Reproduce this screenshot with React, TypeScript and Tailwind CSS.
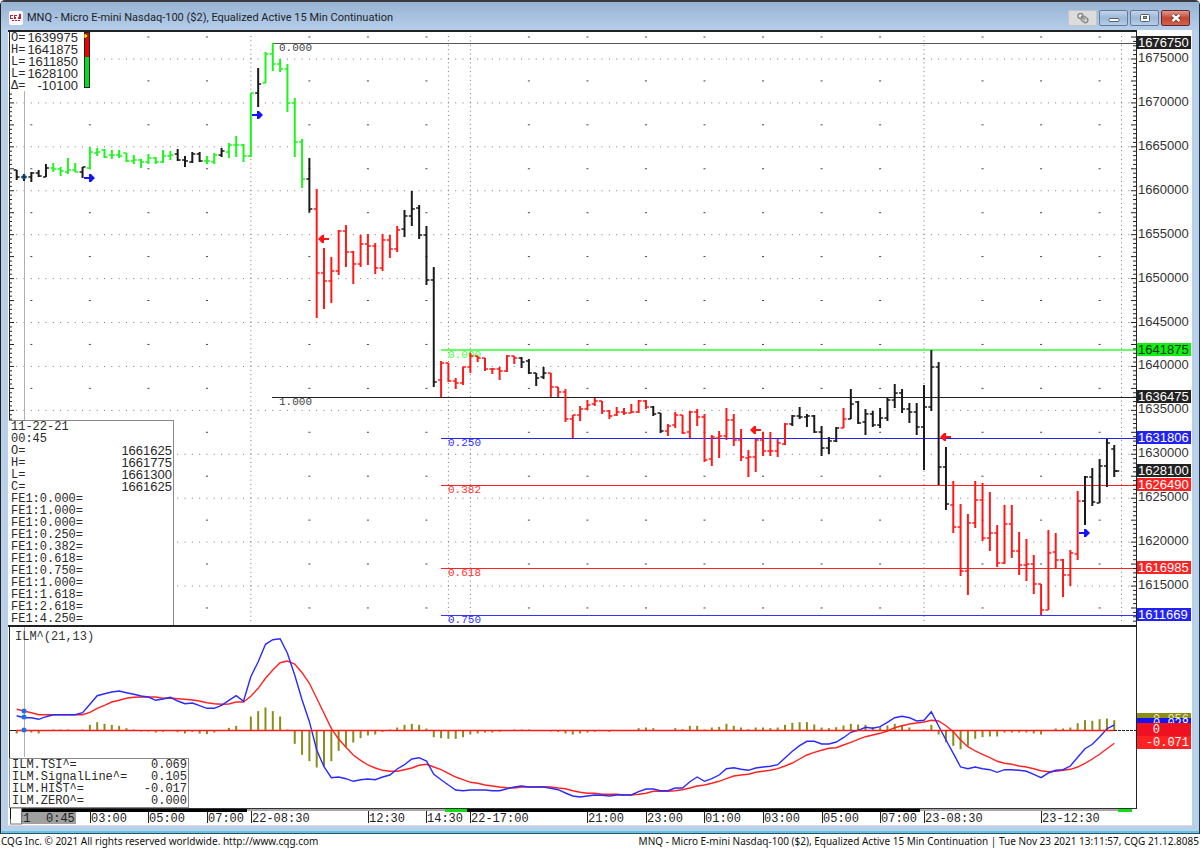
import type { ReactNode } from "react";

type Tone = "k" | "g" | "r";
// high, low, open, close on the plot's vertical scale
type Bar = [number, number, number, number];

const STEP = 7.317;
const FIRST_X = 16.7;
const barX = (i: number) => FIRST_X + i * STEP;

const TONES: Record<Tone, string> = { k: "#1a1a1a", g: "#1cf51c", r: "#ff1a1a" };

const runs: { tone: Tone; bars: Bar[] }[] = [
  { tone: "k", bars: [[170, 180, 170, 177], [174, 181, 177, 177], [172, 182, 177, 173], [170, 177, 173, 176], [164, 177, 177, 168]] },
  { tone: "g", bars: [[163, 172, 168, 169], [167, 176, 169, 171], [158, 174, 172, 170], [163, 172, 170, 172]] },
  { tone: "k", bars: [[167, 178, 172, 167]] },
  {
    tone: "g",
    bars: [
      [147, 169, 168, 152], [148, 156, 153, 152], [149, 158, 150, 157], [150, 159, 155, 155], [150, 158, 155, 156], [153, 162, 153, 161],
      [155, 164, 161, 160], [159, 168, 160, 162], [154, 164, 162, 158], [157, 164, 158, 162], [150, 163, 162, 156], [151, 160, 156, 155],
    ],
  },
  { tone: "k", bars: [[149, 161, 154, 160], [156, 167, 160, 161], [152, 163, 162, 154], [152, 162, 154, 161]] },
  { tone: "g", bars: [[156, 164, 161, 161], [153, 164, 162, 155]] },
  { tone: "k", bars: [[148, 157, 155, 151]] },
  { tone: "g", bars: [[143, 158, 152, 145], [136, 157, 145, 145], [144, 162, 145, 156], [93, 157, 156, 93]] },
  { tone: "k", bars: [[68, 107, 93, 84]] },
  { tone: "g", bars: [[52, 83, 83, 54], [43, 71, 54, 64], [59, 72, 64, 69], [64, 112, 69, 103], [98, 157, 103, 142], [139, 188, 142, 179]] },
  { tone: "k", bars: [[158, 212, 179, 209]] },
  {
    tone: "r",
    bars: [
      [189, 318, 209, 273], [248, 309, 273, 281], [257, 303, 281, 271], [230, 275, 271, 231], [225, 267, 231, 252], [251, 284, 252, 264],
      [235, 267, 264, 244], [234, 265, 244, 246], [243, 274, 246, 268], [234, 271, 268, 240], [235, 258, 240, 249], [226, 252, 249, 230],
    ],
  },
  { tone: "k", bars: [[210, 237, 229, 216], [191, 226, 216, 209], [205, 239, 208, 235], [226, 285, 235, 280], [267, 387, 280, 382]] },
  {
    tone: "r",
    bars: [
      [361, 397, 380, 363], [363, 382, 363, 381], [378, 389, 381, 383], [367, 385, 383, 367], [353, 373, 367, 356], [356, 362, 356, 358],
      [358, 371, 358, 369], [368, 374, 369, 369], [367, 380, 369, 371], [355, 372, 371, 356], [356, 364, 356, 358],
    ],
  },
  { tone: "k", bars: [[357, 368, 358, 362], [359, 374, 361, 373], [373, 386, 373, 378], [367, 379, 377, 373]] },
  {
    tone: "r",
    bars: [
      [373, 397, 373, 387], [387, 397, 387, 392], [389, 422, 392, 419], [415, 438, 419, 415], [406, 421, 415, 409], [400, 410, 409, 405],
      [398, 406, 404, 401], [401, 414, 401, 411], [410, 419, 411, 416], [407, 416, 415, 412], [408, 415, 412, 413], [404, 413, 413, 412],
      [400, 413, 412, 401], [400, 409, 401, 407],
    ],
  },
  { tone: "k", bars: [[406, 416, 407, 414], [413, 433, 413, 431]] },
  {
    tone: "r",
    bars: [
      [424, 436, 431, 426], [412, 428, 425, 415], [415, 434, 415, 433], [411, 438, 432, 412], [409, 426, 412, 417], [414, 462, 417, 460],
      [435, 466, 459, 437], [431, 458, 438, 436], [408, 440, 436, 420], [414, 446, 420, 440], [429, 461, 440, 457], [450, 477, 458, 457],
      [439, 472, 457, 440], [432, 456, 440, 451], [432, 456, 451, 451], [439, 457, 451, 443], [423, 445, 444, 424],
    ],
  },
  {
    tone: "k",
    bars: [
      [415, 426, 424, 416], [407, 419, 416, 417], [414, 427, 417, 416], [415, 433, 416, 432], [426, 456, 432, 448], [437, 454, 448, 441],
      [427, 442, 441, 428],
    ],
  },
  { tone: "r", bars: [[408, 428, 428, 419]] },
  {
    tone: "k",
    bars: [
      [389, 419, 419, 404], [401, 424, 402, 423], [409, 435, 422, 414], [411, 427, 414, 425], [408, 428, 425, 418], [398, 421, 418, 400],
      [384, 408, 400, 393], [389, 413, 393, 409], [403, 423, 409, 412], [403, 435, 412, 427], [385, 470, 427, 407], [350, 411, 407, 367],
      [362, 485, 367, 467], [447, 510, 467, 504],
    ],
  },
  {
    tone: "r",
    bars: [
      [481, 533, 505, 527], [504, 576, 527, 571], [514, 595, 571, 523], [481, 528, 523, 500], [483, 541, 500, 538], [492, 551, 538, 533],
      [525, 567, 533, 563], [505, 564, 563, 524], [505, 558, 524, 551], [532, 575, 551, 565], [539, 581, 565, 564], [555, 594, 564, 584],
      [584, 615, 584, 610], [530, 610, 610, 553], [533, 569, 552, 560], [559, 597, 560, 575], [550, 586, 575, 553], [491, 560, 554, 501],
    ],
  },
  { tone: "k", bars: [[476, 525, 501, 477], [468, 506, 477, 502], [459, 503, 503, 466], [439, 487, 466, 443], [445, 477, 449, 471]] },
];

const bars = runs.flatMap((run) => run.bars.map((bar) => ({ tone: run.tone, bar })));

// indicator series, in thirds of a unit below the panel's 640 mark
const tsi = [
  227, 233, 233, 238, 230, 224, 224, 224, 224, 218, 193, 167, 161, 156, 153, 158, 163, 168, 171, 181, 177, 172, 183, 191, 189, 197, 205, 205, 196,
  181, 167, 184, 110, 65, 13, -1, -4, 40, 105, 180, 245, 330, 380, 413, 411, 416, 424, 419, 417, 419, 411, 405, 387, 374, 357, 353, 363, 403, 419,
  435, 450, 452, 450, 450, 450, 452, 452, 446, 441, 438, 441, 441, 441, 445, 449, 459, 468, 471, 468, 465, 466, 468, 465, 465, 465, 455, 447, 447,
  452, 452, 444, 444, 425, 411, 424, 416, 405, 386, 383, 388, 391, 384, 381, 379, 374, 354, 334, 317, 304, 304, 312, 312, 306, 293, 277, 271, 262,
  265, 260, 247, 233, 229, 233, 243, 241, 215, 258, 300, 340, 381, 386, 381, 386, 389, 397, 389, 389, 391, 394, 403, 413, 399, 391, 389, 378, 352,
  326, 313, 291, 266, 255,
];

const signal = [
  208, 213, 218, 224, 224, 224, 224, 224, 224, 224, 217, 205, 196, 186, 181, 175, 172, 171, 171, 171, 175, 174, 176, 178, 180, 183, 188, 191, 193,
  192, 186, 186, 169, 145, 115, 90, 68, 63, 72, 98, 130, 175, 220, 265, 297, 322, 345, 361, 375, 384, 391, 394, 394, 389, 384, 376, 373, 381, 389,
  400, 411, 419, 427, 430, 435, 438, 441, 443, 444, 441, 441, 441, 440, 441, 444, 446, 452, 457, 460, 460, 463, 463, 463, 465, 465, 463, 460, 454,
  454, 454, 452, 449, 444, 438, 435, 430, 424, 416, 408, 405, 403, 397, 394, 391, 386, 378, 369, 357, 345, 337, 331, 325, 323, 315, 307, 298, 290,
  285, 280, 273, 263, 257, 252, 249, 246, 241, 243, 257, 275, 300, 320, 333, 343, 353, 364, 370, 373, 378, 381, 386, 392, 395, 394, 391, 388, 381,
  370, 357, 343, 326, 310,
];

const hist = [
  -9, 0, -6, -9, 0, 3, 3, 3, 0, 3, 17, 25, 20, 17, 14, 7, 3, -3, -3, -6, -4, 0, -5, -9, -4, -9, -11, -6, 0, 8, 14, 0, 42, 58, 69, 58, 42, 3, -40,
  -73, -92, -111, -108, -92, -61, -50, -36, -23, -15, -12, -4, 3, 9, 17, 20, 17, 6, -20, -23, -25, -25, -20, -12, -9, -6, -6, -4, 0, 3, 3, 3, 0, 0,
  -3, -4, -9, -12, -9, -6, -4, 0, -4, 0, 0, 0, 7, 9, 7, 0, 0, 7, 4, 14, 14, 3, 9, 11, 20, 14, 9, 4, 9, 9, 7, 9, 17, 23, 25, 25, 18, 9, 7, 10, 15,
  20, 18, 17, 10, 10, 15, 20, 15, 9, 0, 3, 17, -12, -35, -46, -56, -46, -25, -20, -18, -18, -6, -6, -6, -6, -9, -12, 0, 6, 6, 9, 22, 31, 29, 34,
  36, 31,
];

const toPoints = (series: number[]) => series.map((v, i) => `${barX(i).toFixed(1)},${(640 + v / 3).toFixed(1)}`).join(" ");

const priceRows = Array.from({ length: 13 }, (_, k) => ({ price: 1675000 - k * 5000, y: 59 + k * 43.92 }));
const timeMarks = [2, 10, 18, 26, 40, 48, 56, 70, 78, 86, 94, 102, 110, 118, 132, 140, 148];
const sessionMarks = [32, 59, 62, 124, 151];
const minorTicks = Array.from({ length: 134 }, (_, n) => ({ y: 37.04 + n * 4.392, long: n % 5 === 0 }));

const levels = [
  { y: 43.5, x: 272, color: "#555555", label: "0.000", text: "#444444" },
  { y: 350, x: 441, color: "#66ff66", label: "0.000", text: "#44ff44" },
  { y: 397.5, x: 272, color: "#222222", label: "1.000", text: "#444444" },
  { y: 438.5, x: 441, color: "#2222ff", label: "0.250", text: "#3333ff" },
  { y: 485.5, x: 441, color: "#ff2222", label: "0.382", text: "#ff3333" },
  { y: 568.5, x: 441, color: "#ff2222", label: "0.618", text: "#ff3333" },
  { y: 615.5, x: 441, color: "#3333ff", label: "0.750", text: "#3333ff" },
];

const badges = [
  { value: "1676750", y: 43, bg: "#222222", fg: "#ffffff" },
  { value: "1641875", y: 350, bg: "#11ee11", fg: "#063306" },
  { value: "1636475", y: 397, bg: "#222222", fg: "#ffffff" },
  { value: "1631806", y: 438, bg: "#2222f8", fg: "#ffffff" },
  { value: "1628100", y: 471, bg: "#222222", fg: "#ffffff" },
  { value: "1626490", y: 485, bg: "#ff2222", fg: "#ffffff" },
  { value: "1616985", y: 568, bg: "#ff2222", fg: "#ffffff" },
  { value: "1611669", y: 615, bg: "#2222f8", fg: "#ffffff" },
];

const signals = [
  { x: 84, y: 178, buy: true },
  { x: 252, y: 115, buy: true },
  { x: 318, y: 239, buy: false },
  { x: 750, y: 430, buy: false },
  { x: 940, y: 437, buy: false },
  { x: 1079, y: 533, buy: true },
];

const times = [
  { i: 10, label: "03:00" },
  { i: 18, label: "05:00" },
  { i: 26, label: "07:00" },
  { i: 32, label: "22-08:30" },
  { i: 48, label: "12:30" },
  { i: 56, label: "14:30" },
  { i: 62, label: "22-17:00" },
  { i: 78, label: "21:00" },
  { i: 86, label: "23:00" },
  { i: 94, label: "01:00" },
  { i: 102, label: "03:00" },
  { i: 110, label: "05:00" },
  { i: 118, label: "07:00" },
  { i: 124, label: "23-08:30" },
  { i: 140, label: "23-12:30" },
];

const sessions = [
  { from: 22, to: 247, color: "#000000" },
  { from: 247, to: 445, color: "#aaa6aa" },
  { from: 445, to: 467, color: "#11dd11" },
  { from: 467, to: 920, color: "#000000" },
  { from: 920, to: 1118, color: "#aaa6aa" },
  { from: 1118, to: 1132, color: "#11dd11" },
];

const quote = [
  ["O=", "1639975"],
  ["H=", "1641875"],
  ["L=", "1611850"],
  ["L=", "1628100"],
  ["Δ=", "-10100"],
];

const cursorRows = [
  ["11-22-21", ""],
  ["00:45", ""],
  ["O=", "1661625"],
  ["H=", "1661775"],
  ["L=", "1661300"],
  ["C=", "1661625"],
  ["FE1:0.000=", ""],
  ["FE1:1.000=", ""],
  ["FE1:0.000=", ""],
  ["FE1:0.250=", ""],
  ["FE1:0.382=", ""],
  ["FE1:0.618=", ""],
  ["FE1:0.750=", ""],
  ["FE1:1.000=", ""],
  ["FE1:1.618=", ""],
  ["FE1:2.618=", ""],
  ["FE1:4.250=", ""],
];

const ilmRows = [
  ["ILM.TSI^=", "0.069"],
  ["ILM.SignalLine^=", "0.105"],
  ["ILM.HIST^=", "-0.017"],
  ["ILM.ZERO^=", "0.000"],
];

function Rows({ rows, digits = false }: { rows: string[][]; digits?: boolean }) {
  return (
    <dl className="font-['Liberation_Mono',monospace] text-[12px] leading-[12px] text-[#2a2a2a]">
      {rows.map(([name, value], i) => (
        <div key={i} className="flex justify-between">
          <dt>{name}</dt>
          <dd className={digits ? "font-['Liberation_Sans',sans-serif] text-[13px] leading-[12px]" : ""}>{value}</dd>
        </div>
      ))}
    </dl>
  );
}

function SignalArrow({ x, y, buy }: { x: number; y: number; buy: boolean }) {
  return buy ? (
    <path d={`M${x} ${y - 1}h5v-3h2l4 4-4 4h-2v-3h-5z`} fill="#1414ff" />
  ) : (
    <path d={`M${x + 11} ${y - 1}h-5v-3h-2l-4 4 4 4h2v-3h5z`} fill="#ff1414" />
  );
}

function PriceChart() {
  return (
    <svg viewBox="8 30 1184 597" className="block h-auto w-full" role="img" aria-label="MNQ 15 minute price bars">
      <g stroke="#777777" strokeWidth="1">
        {priceRows.map(({ y }) => (
          <line key={y} x1={FIRST_X - 0.5} x2="1134" y1={y} y2={y} strokeDasharray="1 6.317" />
        ))}
        {sessionMarks.map((i) => (
          <line key={i} x1={barX(i)} x2={barX(i)} y1="36" y2="624" strokeDasharray="1 3.392" />
        ))}
      </g>
      <g stroke="#444444" strokeWidth="1">
        {timeMarks.flatMap((i) =>
          Array.from({ length: 14 }, (_, k) => (
            <line key={`${i}-${k}`} x1={barX(i) - 1} x2={barX(i) + 1} y1={37 + k * 43.92} y2={37 + k * 43.92} />
          )),
        )}
      </g>

      <line x1="24.5" x2="24.5" y1="91" y2="421" stroke="#b0b0b0" />

      {levels.map((level) => (
        <g key={level.y}>
          <line x1={level.x} x2="1136" y1={level.y} y2={level.y} stroke={level.color} strokeWidth={level.y === 350 ? 2 : 1} />
          <text x={level.x + 7} y={Math.floor(level.y) + 8} fill={level.text} className="font-['Liberation_Mono',monospace] text-[11px]">
            {level.label}
          </text>
        </g>
      ))}

      {bars.map(({ tone, bar: [high, low, open, close] }, i) => (
        <g key={i} stroke={TONES[tone]}>
          <line x1={barX(i)} x2={barX(i)} y1={high} y2={low} strokeWidth="2" />
          <path d={`M${barX(i) - 3} ${open}H${barX(i)}M${barX(i)} ${close}h3`} strokeWidth="1.5" />
        </g>
      ))}
      <line x1={barX(150)} x2={barX(150) + 5} y1="471" y2="471" stroke="#1a1a1a" strokeWidth="1.5" />
      <circle cx="24" cy="177" r="2.5" fill="#2f8fee" />
      <path d="M22 177h4M24 174v7" stroke="#111111" />

      {signals.map((s) => (
        <SignalArrow key={s.x} {...s} />
      ))}

      <g stroke="#222222">
        {minorTicks.map(({ y, long }) => (
          <path key={y} d={`M9 ${y}h${long ? 5 : 3}M1136 ${y}h${long ? -5 : -3}`} />
        ))}
        <line x1="9.5" x2="9.5" y1="31" y2="626" />
        <line x1="1136.5" x2="1136.5" y1="31" y2="627" />
        <line x1="8" x2="1137" y1="31" y2="31" strokeWidth="2" />
        <line x1="8" x2="1137" y1="626" y2="626" strokeWidth="2" />
      </g>

      <g className="font-['Liberation_Sans',sans-serif] text-[13px]">
        {priceRows.map(({ price, y }) => (
          <text key={price} x="1138" y={Math.round(y) + 3} fill="#333333">
            {price}
          </text>
        ))}
        {badges.map(({ value, y, bg, fg }) => (
          <g key={value}>
            <rect x="1137" y={y - 7} width="54" height="13" fill={bg} />
            <text x="1138" y={y + 4} fill={fg}>
              {value}
            </text>
          </g>
        ))}
      </g>
    </svg>
  );
}

function IlmChart() {
  return (
    <svg viewBox="8 627 1184 181" className="block h-auto w-full" role="img" aria-label="ILM indicator">
      <line x1="24.5" x2="24.5" y1="627" y2="757" stroke="#b0b0b0" />
      <g stroke="#8c8c1a" strokeWidth="2">
        {hist.map((v, i) => v !== 0 && <line key={i} x1={barX(i)} x2={barX(i)} y1="730.5" y2={730.5 - v / 3} />)}
      </g>
      <line x1="9" x2="17" y1="730.5" y2="730.5" stroke="#222222" />
      <line x1="1114" x2="1136" y1="730.5" y2="730.5" stroke="#222222" strokeDasharray="3 1" />
      <g fill="none" strokeWidth="1.4">
        <polyline points={toPoints(signal)} stroke="#ff2222" />
        <polyline points={toPoints(tsi)} stroke="#2a2aff" />
        <line x1="16" x2="1114" y1="730.5" y2="730.5" stroke="#ff1a1a" />
      </g>
      {[711, 717, 730].map((y) => (
        <circle key={y} cx="24" cy={y} r="2.5" fill="#1f6fe8" />
      ))}
      <line x1="9.5" x2="9.5" y1="627" y2="808" stroke="#222222" />
      <line x1="1136.5" x2="1136.5" y1="627" y2="808" stroke="#222222" />
      <text x="15" y="640" fill="#333333" className="font-['Liberation_Mono',monospace] text-[12px]">
        ILM^(21,13)
      </text>
      <g fill="#ffffff" textAnchor="end" className="font-['Liberation_Mono',monospace] text-[12px]">
        <rect x="1137" y="713" width="54" height="13" fill="#8c8c1a" />
        <text x="1189" y="723" fill="#e4e4c0">
          0.056
        </text>
        <rect x="1137" y="718" width="54" height="13" fill="#1414ee" />
        <text x="1189" y="727">0.028</text>
        <rect x="1137" y="723" width="54" height="13" fill="#ee1122" />
        <text x="1160" y="733">0</text>
        <rect x="1137" y="736" width="54" height="13" fill="#ff2222" />
        <text x="1189" y="746">-0.071</text>
      </g>
    </svg>
  );
}

function TimeAxis() {
  return (
    <svg viewBox="8 808 1184 18" className="block h-auto w-full" role="img" aria-label="Time axis">
      <line x1="22" x2="1137" y1="808.5" y2="808.5" stroke="#333333" />
      {sessions.map((s) => (
        <rect key={s.from} x={s.from} y="809" width={s.to - s.from} height={s.color === "#aaa6aa" ? 2 : 3} fill={s.color} />
      ))}
      <rect x="21" y="812" width="55" height="12" fill="#a0a0a0" />
      <g fill="#222222" className="font-['Liberation_Mono',monospace] text-[12px]">
        <text x="16" y="822">21</text>
        <text x="46" y="822">0:45</text>
        {times.map(({ i, label }) => (
          <g key={i}>
            <line x1={Math.round(barX(i)) + 0.5} x2={Math.round(barX(i)) + 0.5} y1="811" y2="823" stroke="#222222" />
            <text x={Math.round(barX(i)) + 1} y="822">
              {label}
            </text>
          </g>
        ))}
      </g>
      <rect x="10.5" y="808" width="11" height="16" fill="#ffffff" stroke="#777777" />
      <line x1="10.5" x2="10.5" y1="808" y2="819" stroke="#111111" />
      <line x1="8" x2="1192" y1="825.5" y2="825.5" stroke="#dddddd" />
    </svg>
  );
}

function AppIcon() {
  return (
    <svg viewBox="0 0 14 14" className="size-[14px]" aria-hidden="true">
      <rect width="14" height="14" rx="2" fill="#ffffff" />
      <g fill="#c41e3a">
        <path d="M1 4h3v1H2v2h2v1H1zM5 4h3v1H6v1h1v2H5zM10 3h2v5h-3V6h1z" />
        <path d="M3 9h2v1H3zM6 9h2v1H6zM9 9h2v1H9z" />
      </g>
    </svg>
  );
}

function WindowButton({ label, look, children }: { label: string; look: string; children: ReactNode }) {
  return (
    <button type="button" aria-label={label} className={`flex h-4 w-[29px] items-center justify-center border ${look}`}>
      {children}
    </button>
  );
}

const glass = "rounded-[2px] border-[#64799b] bg-gradient-to-b from-[#c3d5ea] via-[#9db8d6] to-[#b5cde8]";

function TitleBar() {
  return (
    <header className="flex h-[30px] items-center justify-between border-t-2 border-[#3c3a40] bg-gradient-to-b from-[#97b2d3] to-[#b6cee9] pt-1 pr-[9px] pl-2">
      <div className="flex items-center gap-1">
        <AppIcon />
        <h1 className="font-['Roboto',sans-serif] text-[11px] whitespace-nowrap text-[#1b1f2a]">
          MNQ - Micro E-mini Nasdaq-100 ($2), Equalized Active 15 Min Continuation
        </h1>
      </div>
      <div className="flex gap-[2px]">
        <WindowButton label="Link" look="border-[#c4c4c4] bg-[#dcdcdc]">
          <svg viewBox="0 0 14 12" className="h-3 w-[14px]" fill="none" stroke="#8b8b8b" strokeWidth="1.5" aria-hidden="true">
            <circle cx="4.5" cy="4" r="2.5" fill="#f2f2f2" />
            <rect x="5" y="5" width="7" height="5" rx="2.5" transform="rotate(35 8.5 7.5)" />
            <path d="M5 4l4 4" />
          </svg>
        </WindowButton>
        <WindowButton label="Minimize" look={glass}>
          <svg viewBox="0 0 12 10" className="h-[10px] w-3" aria-hidden="true">
            <rect x="1" y="5.5" width="10" height="3" rx="1" fill="#ffffff" stroke="#55606f" />
          </svg>
        </WindowButton>
        <WindowButton label="Maximize" look={glass}>
          <svg viewBox="0 0 12 10" className="h-[10px] w-3" aria-hidden="true">
            <rect x="1.5" y="1.5" width="9" height="7" rx="1" fill="#ffffff" stroke="#55606f" />
            <rect x="4.5" y="3.5" width="3" height="2" fill="#8fabc9" stroke="#55606f" />
          </svg>
        </WindowButton>
        <WindowButton label="Close" look="rounded-[2px] border-[#6a2430] bg-gradient-to-b from-[#dd9a8e] via-[#c4452f] to-[#d0644c]">
          <svg viewBox="0 0 12 10" className="h-[10px] w-3" aria-hidden="true">
            <path d="M2.5 2l7 6M9.5 2l-7 6" stroke="#5d3030" strokeWidth="4" />
            <path d="M2.5 2l7 6M9.5 2l-7 6" stroke="#ffffff" strokeWidth="2.4" />
          </svg>
        </WindowButton>
      </div>
    </header>
  );
}

export default function App() {
  return (
    <div className="w-full bg-white">
      <div className="overflow-hidden rounded-t-[5px] border-r border-b border-l border-l-[#222222] border-r-[#223344] border-b-[#33505c] bg-[#b8d0ea]">
        <TitleBar />
        <main className="mx-[7px] bg-white">
          <section className="relative">
            <PriceChart />
            <div className="absolute top-0 left-[2px] flex h-[61px] w-[87px] items-start justify-between border-t-2 border-[#222222] bg-white pr-[7px] pl-px">
              <div className="w-[67px]">
                <Rows rows={quote} digits />
              </div>
              <svg viewBox="0 0 6 56" className="h-14 w-[6px]" aria-hidden="true">
                <rect x="0.5" y="0.5" width="5" height="55" fill="#00e020" stroke="#222222" />
                <rect x="1" y="1" width="4" height="24" fill="#ee0000" />
                <path d="M0 2h2l2 2-2 2h-2z" fill="#ffe600" stroke="#333300" strokeWidth="0.6" />
              </svg>
            </div>
            <div className="absolute bottom-[2px] left-px w-[165px] border-t border-r border-[#888888] bg-white pr-px pl-[2px]">
              <Rows rows={cursorRows} digits />
            </div>
          </section>
          <section className="relative">
            <IlmChart />
            <div className="absolute bottom-0 left-px w-[180px] border border-[#888888] bg-white pr-px pl-[2px]">
              <Rows rows={ilmRows} />
            </div>
          </section>
          <TimeAxis />
        </main>
        <div className="h-[7px] border-b-2 border-[#5cc6e4]" />
      </div>
      <footer className="flex h-[15px] items-center justify-between px-px font-['Noto_Sans',sans-serif] text-[10px] whitespace-nowrap text-[#111111]">
        <p>
          CQG Inc. © 2021 All rights reserved worldwide. <a href="http://www.cqg.com">http://www.cqg.com</a>
        </p>
        <p>MNQ - Micro E-mini Nasdaq-100 ($2), Equalized Active 15 Min Continuation | Tue Nov 23 2021 13:11:57, CQG 21.12.8085</p>
      </footer>
    </div>
  );
}
